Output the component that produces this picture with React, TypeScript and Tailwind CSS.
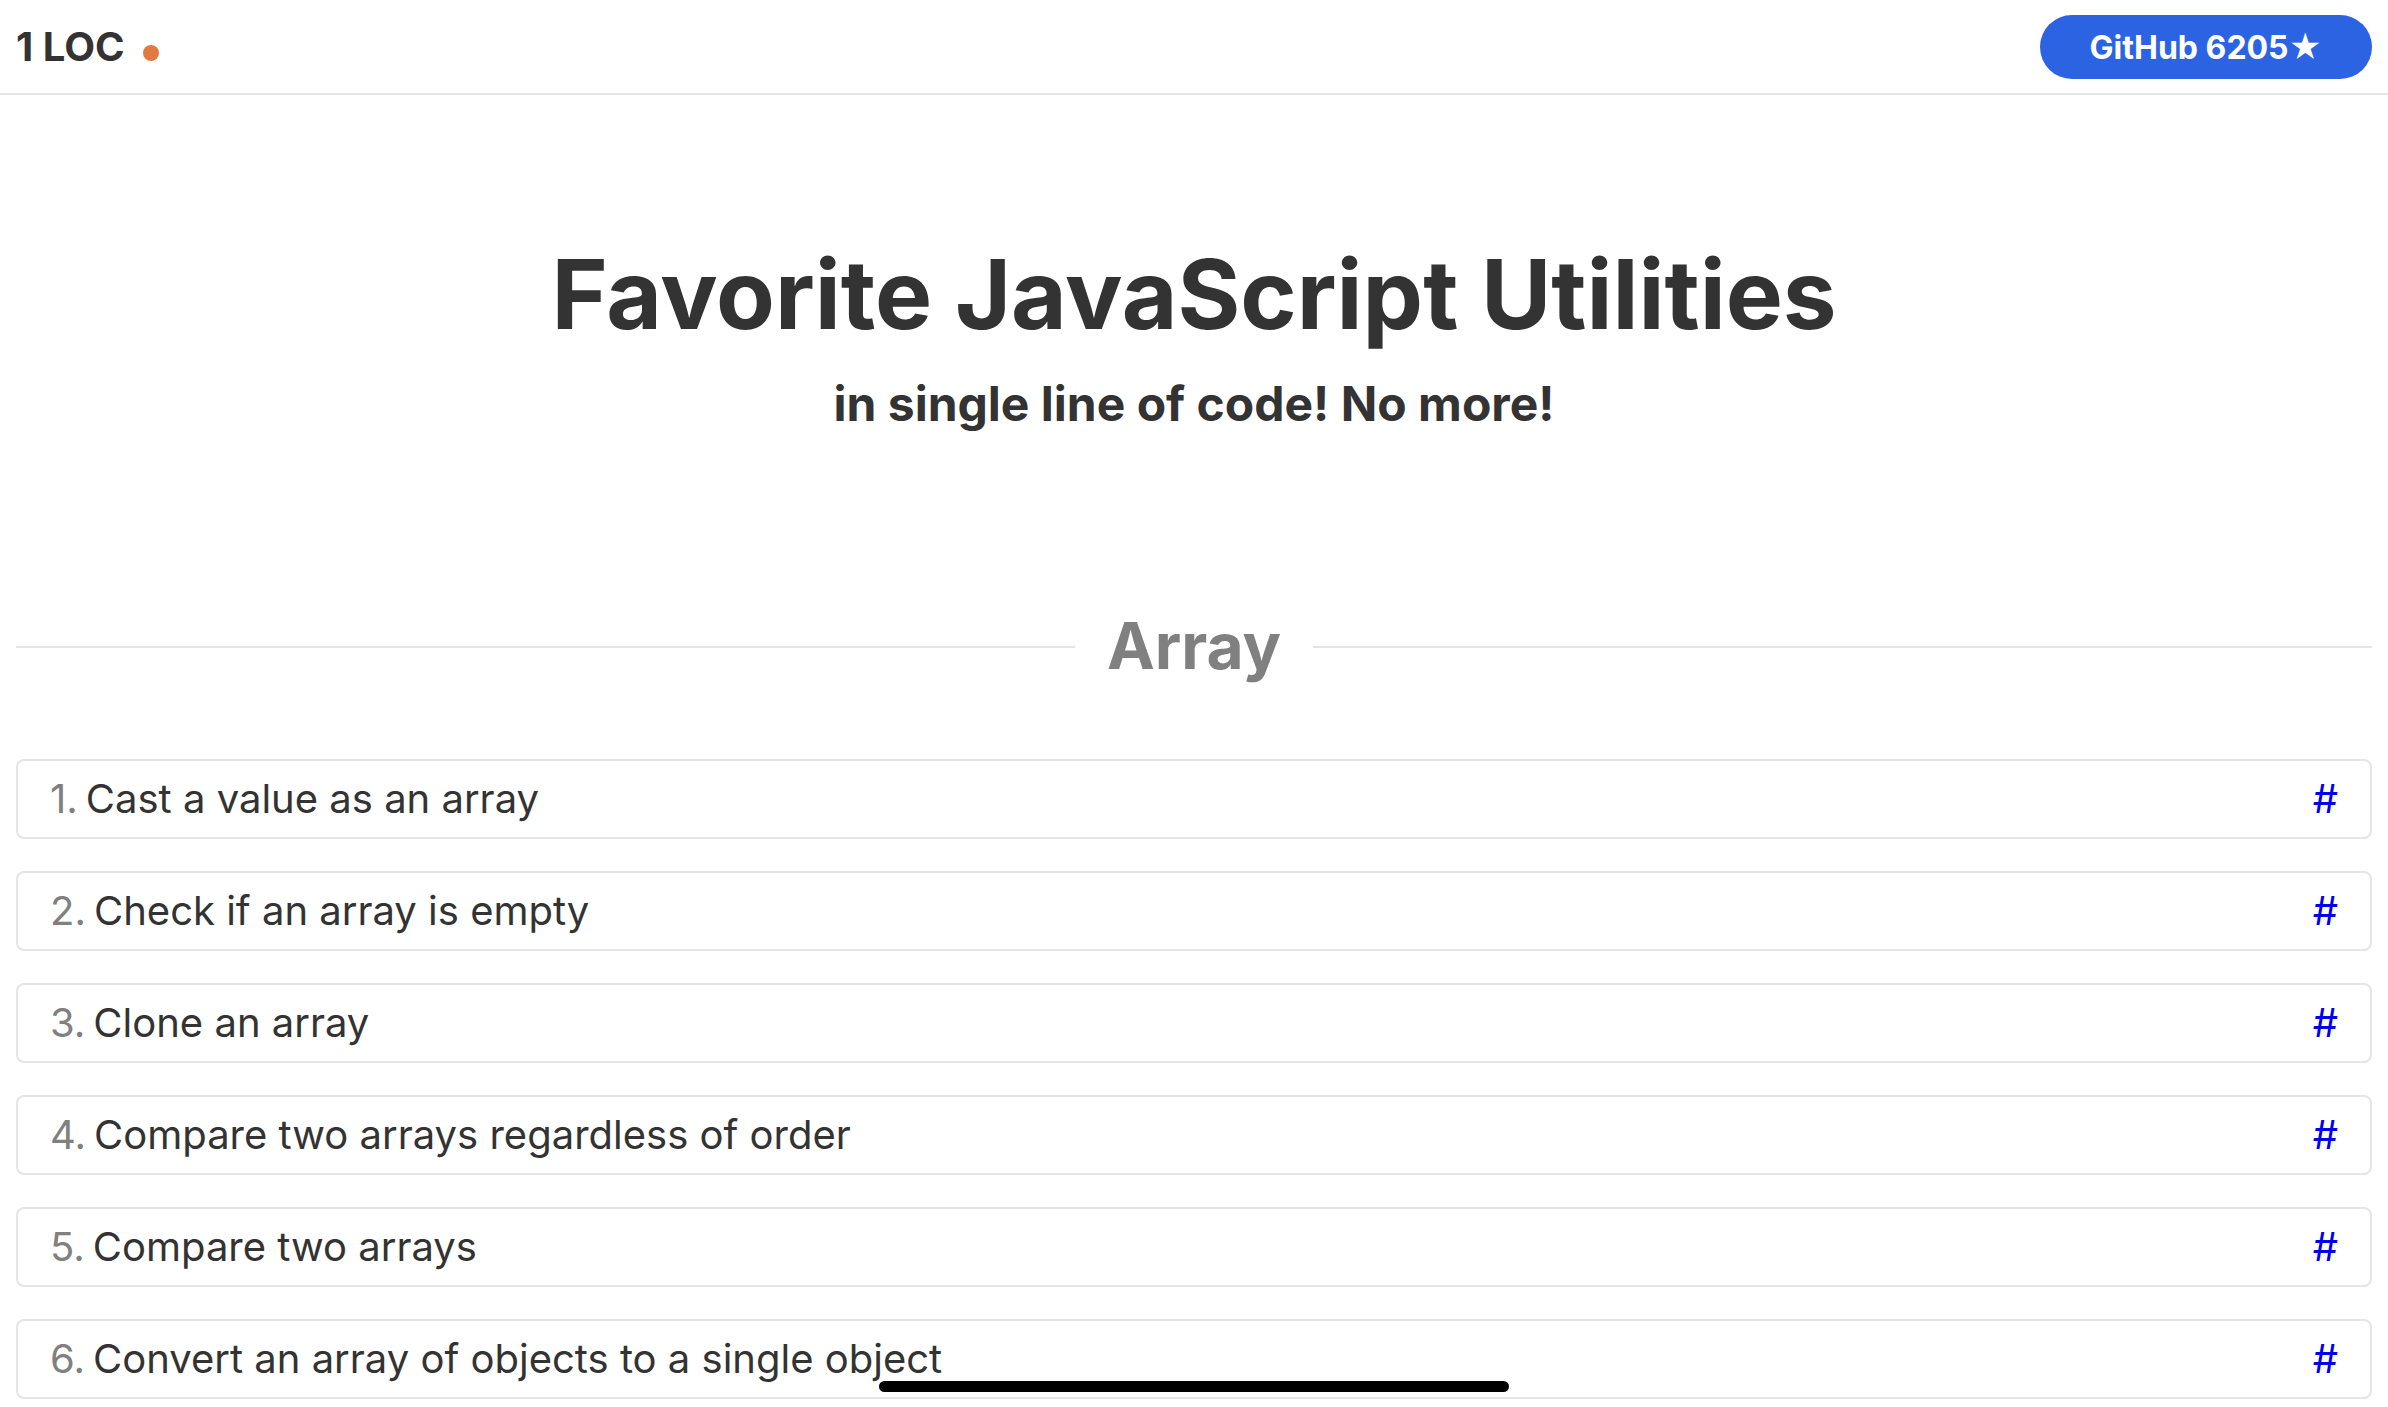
const items = [
  "Cast a value as an array",
  "Check if an array is empty",
  "Clone an array",
  "Compare two arrays regardless of order",
  "Compare two arrays",
  "Convert an array of objects to a single object",
];

export default function App() {
  return (
    <div className="h-screen overflow-hidden bg-white font-['Inter',sans-serif] text-[#333]">
      <header className="flex items-center justify-between border-b-2 border-[#e5e5e5] px-4 pt-[15px] pb-[14px]">
        <a href="#top" className="flex items-center text-[40px] leading-[62px] font-bold">
          1 LOC
          <span className="mt-3 ml-[18px] size-4 rounded-full bg-[#e27a3f]" />
        </a>
        <a href="#github" className="rounded-full bg-[#2b63e3] px-[50px] pt-0.5 text-[32px] leading-[62px] font-bold text-white">
          GitHub 6205★
        </a>
      </header>
      <main className="px-4">
        <section className="pt-40 pb-[158px] text-center">
          <h1 className="text-[96px] leading-[78px] font-bold">Favorite JavaScript Utilities</h1>
          <h2 className="mt-[35px] text-[48px] leading-[72px] font-bold">in single line of code! No more!</h2>
        </section>
        <section>
          <div className="flex items-center gap-8">
            <div className="h-0.5 flex-1 bg-[#e5e5e5]" />
            <h2 className="pb-0.5 text-[64px] leading-[96px] font-bold text-[#808080]">Array</h2>
            <div className="h-0.5 flex-1 bg-[#e5e5e5]" />
          </div>
          <ol className="mt-[63px] flex flex-col gap-8">
            {items.map((t, i) => (
              <li key={t} className="flex justify-between rounded-lg border-2 border-[#e5e5e5] px-8 py-2 text-[40px] leading-[60px]">
                <div><span className="mr-2 text-[#808080]">{i + 1}.</span>{t}</div>
                <a href="#top" aria-label={`Link to ${t}`} className="text-[#0000ee]">#</a>
              </li>
            ))}
          </ol>
        </section>
      </main>
      <div className="fixed bottom-[15px] left-1/2 h-[11px] w-[630px] -translate-x-1/2 rounded-full bg-black" />
    </div>
  );
}
